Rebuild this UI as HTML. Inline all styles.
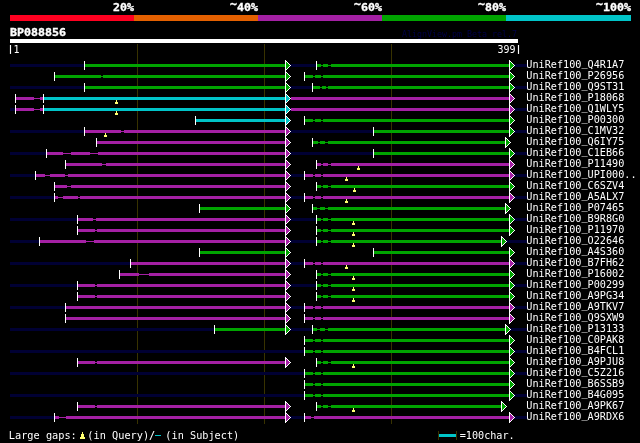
<!DOCTYPE html>
<html><head><meta charset="utf-8"><title>AlignView</title>
<style>html,body{margin:0;padding:0;background:#000;overflow:hidden}svg{display:block;will-change:transform}text{font-family:"DejaVu Sans Mono","Liberation Mono",monospace}</style>
</head><body>
<svg width="640" height="443" viewBox="0 0 640 443" shape-rendering="crispEdges">
<rect x="0" y="0" width="640" height="443" fill="#000"/>
<rect x="10" y="15" width="124" height="6" fill="#ff0020"/>
<rect x="134" y="15" width="124" height="6" fill="#e46000"/>
<rect x="258" y="15" width="124" height="6" fill="#a420a4"/>
<rect x="382" y="15" width="124" height="6" fill="#00a400"/>
<rect x="506" y="15" width="125" height="6" fill="#00c4c8"/>
<text x="113" y="11" font-size="11" font-weight="bold" fill="#fff" textLength="21" lengthAdjust="spacingAndGlyphs" xml:space="preserve" stroke="#fff" stroke-width="0.35">20%</text>
<text x="230" y="11" font-size="11" font-weight="bold" fill="#fff" textLength="28" lengthAdjust="spacingAndGlyphs" xml:space="preserve" stroke="#fff" stroke-width="0.35"><tspan dy="-3.5">~</tspan><tspan dy="3.5">40%</tspan></text>
<text x="354" y="11" font-size="11" font-weight="bold" fill="#fff" textLength="28" lengthAdjust="spacingAndGlyphs" xml:space="preserve" stroke="#fff" stroke-width="0.35"><tspan dy="-3.5">~</tspan><tspan dy="3.5">60%</tspan></text>
<text x="478" y="11" font-size="11" font-weight="bold" fill="#fff" textLength="28" lengthAdjust="spacingAndGlyphs" xml:space="preserve" stroke="#fff" stroke-width="0.35"><tspan dy="-3.5">~</tspan><tspan dy="3.5">80%</tspan></text>
<text x="596" y="11" font-size="11" font-weight="bold" fill="#fff" textLength="35" lengthAdjust="spacingAndGlyphs" xml:space="preserve" stroke="#fff" stroke-width="0.35"><tspan dy="-3.5">~</tspan><tspan dy="3.5">100%</tspan></text>
<text x="10" y="36" font-size="11" font-weight="bold" fill="#fff" textLength="56" lengthAdjust="spacingAndGlyphs" xml:space="preserve" stroke="#fff" stroke-width="0.35">BP088856</text>
<text x="402" y="37" font-size="8" font-weight="normal" fill="#000048" textLength="115" lengthAdjust="spacingAndGlyphs" xml:space="preserve">AlignView.pm Beta rel.7</text>
<rect x="10" y="39" width="508" height="4" fill="#fff"/>
<text x="7.5" y="52" font-size="9" font-weight="bold" fill="#fff" textLength="6" lengthAdjust="spacingAndGlyphs" xml:space="preserve">|</text>
<text x="13.5" y="53" font-size="11" font-weight="normal" fill="#fff" textLength="6" lengthAdjust="spacingAndGlyphs" xml:space="preserve">1</text>
<text x="497.5" y="53" font-size="11" font-weight="normal" fill="#fff" textLength="18" lengthAdjust="spacingAndGlyphs" xml:space="preserve">399</text>
<text x="515.5" y="52" font-size="9" font-weight="bold" fill="#fff" textLength="6" lengthAdjust="spacingAndGlyphs" xml:space="preserve">|</text>
<rect x="137" y="44" width="1" height="380" fill="#383200"/>
<rect x="264" y="44" width="1" height="380" fill="#383200"/>
<rect x="391" y="44" width="1" height="380" fill="#383200"/>
<rect x="10" y="64" width="517" height="3" fill="#000033"/>
<rect x="85" y="64" width="200" height="3" fill="#00a400"/>
<rect x="84" y="61" width="1" height="9" fill="#fff"/>
<path d="M286 61L290 65.5L286 70Z" fill="#00a400"/>
<rect x="285" y="60" width="1" height="11" fill="#fff"/>
<rect x="286" y="61" width="1" height="1" fill="#fff"/>
<rect x="286" y="69" width="1" height="1" fill="#fff"/>
<rect x="287" y="62" width="1" height="1" fill="#fff"/>
<rect x="287" y="68" width="1" height="1" fill="#fff"/>
<rect x="288" y="63" width="1" height="1" fill="#fff"/>
<rect x="288" y="67" width="1" height="1" fill="#fff"/>
<rect x="289" y="64" width="1" height="1" fill="#fff"/>
<rect x="289" y="66" width="1" height="1" fill="#fff"/>
<rect x="290" y="65" width="1" height="1" fill="#fff"/>
<rect x="317" y="64" width="192" height="3" fill="#000"/>
<rect x="317" y="65" width="192" height="1" fill="#00a400"/>
<rect x="317" y="64" width="4" height="3" fill="#00a400"/>
<rect x="323" y="64" width="5" height="3" fill="#00a400"/>
<rect x="331" y="64" width="178" height="3" fill="#00a400"/>
<rect x="316" y="61" width="1" height="9" fill="#fff"/>
<path d="M510 61L514 65.5L510 70Z" fill="#00a400"/>
<rect x="509" y="60" width="1" height="11" fill="#fff"/>
<rect x="510" y="61" width="1" height="1" fill="#fff"/>
<rect x="510" y="69" width="1" height="1" fill="#fff"/>
<rect x="511" y="62" width="1" height="1" fill="#fff"/>
<rect x="511" y="68" width="1" height="1" fill="#fff"/>
<rect x="512" y="63" width="1" height="1" fill="#fff"/>
<rect x="512" y="67" width="1" height="1" fill="#fff"/>
<rect x="513" y="64" width="1" height="1" fill="#fff"/>
<rect x="513" y="66" width="1" height="1" fill="#fff"/>
<rect x="514" y="65" width="1" height="1" fill="#fff"/>
<text x="526.3" y="68" font-size="11" font-weight="normal" fill="#fff" textLength="98.0" lengthAdjust="spacingAndGlyphs" xml:space="preserve">UniRef100<tspan dy="-2">_</tspan><tspan dy="2">Q4R1A7</tspan></text>
<rect x="55" y="76" width="230" height="1" fill="#00a400"/>
<rect x="55" y="75" width="46" height="3" fill="#00a400"/>
<rect x="103" y="75" width="182" height="3" fill="#00a400"/>
<rect x="54" y="72" width="1" height="9" fill="#fff"/>
<path d="M286 72L290 76.5L286 81Z" fill="#00a400"/>
<rect x="285" y="71" width="1" height="11" fill="#fff"/>
<rect x="286" y="72" width="1" height="1" fill="#fff"/>
<rect x="286" y="80" width="1" height="1" fill="#fff"/>
<rect x="287" y="73" width="1" height="1" fill="#fff"/>
<rect x="287" y="79" width="1" height="1" fill="#fff"/>
<rect x="288" y="74" width="1" height="1" fill="#fff"/>
<rect x="288" y="78" width="1" height="1" fill="#fff"/>
<rect x="289" y="75" width="1" height="1" fill="#fff"/>
<rect x="289" y="77" width="1" height="1" fill="#fff"/>
<rect x="290" y="76" width="1" height="1" fill="#fff"/>
<rect x="305" y="76" width="204" height="1" fill="#00a400"/>
<rect x="305" y="75" width="8" height="3" fill="#00a400"/>
<rect x="315" y="75" width="6" height="3" fill="#00a400"/>
<rect x="323" y="75" width="186" height="3" fill="#00a400"/>
<rect x="304" y="72" width="1" height="9" fill="#fff"/>
<path d="M510 72L514 76.5L510 81Z" fill="#00a400"/>
<rect x="509" y="71" width="1" height="11" fill="#fff"/>
<rect x="510" y="72" width="1" height="1" fill="#fff"/>
<rect x="510" y="80" width="1" height="1" fill="#fff"/>
<rect x="511" y="73" width="1" height="1" fill="#fff"/>
<rect x="511" y="79" width="1" height="1" fill="#fff"/>
<rect x="512" y="74" width="1" height="1" fill="#fff"/>
<rect x="512" y="78" width="1" height="1" fill="#fff"/>
<rect x="513" y="75" width="1" height="1" fill="#fff"/>
<rect x="513" y="77" width="1" height="1" fill="#fff"/>
<rect x="514" y="76" width="1" height="1" fill="#fff"/>
<text x="526.3" y="79" font-size="11" font-weight="normal" fill="#fff" textLength="98.0" lengthAdjust="spacingAndGlyphs" xml:space="preserve">UniRef100<tspan dy="-2">_</tspan><tspan dy="2">P26956</tspan></text>
<rect x="10" y="86" width="517" height="3" fill="#000033"/>
<rect x="85" y="86" width="200" height="3" fill="#00a400"/>
<rect x="84" y="83" width="1" height="9" fill="#fff"/>
<path d="M286 83L290 87.5L286 92Z" fill="#00a400"/>
<rect x="285" y="82" width="1" height="11" fill="#fff"/>
<rect x="286" y="83" width="1" height="1" fill="#fff"/>
<rect x="286" y="91" width="1" height="1" fill="#fff"/>
<rect x="287" y="84" width="1" height="1" fill="#fff"/>
<rect x="287" y="90" width="1" height="1" fill="#fff"/>
<rect x="288" y="85" width="1" height="1" fill="#fff"/>
<rect x="288" y="89" width="1" height="1" fill="#fff"/>
<rect x="289" y="86" width="1" height="1" fill="#fff"/>
<rect x="289" y="88" width="1" height="1" fill="#fff"/>
<rect x="290" y="87" width="1" height="1" fill="#fff"/>
<rect x="313" y="86" width="196" height="3" fill="#000"/>
<rect x="313" y="87" width="196" height="1" fill="#00a400"/>
<rect x="313" y="86" width="7" height="3" fill="#00a400"/>
<rect x="322" y="86" width="4" height="3" fill="#00a400"/>
<rect x="328" y="86" width="181" height="3" fill="#00a400"/>
<rect x="312" y="83" width="1" height="9" fill="#fff"/>
<path d="M510 83L514 87.5L510 92Z" fill="#00a400"/>
<rect x="509" y="82" width="1" height="11" fill="#fff"/>
<rect x="510" y="83" width="1" height="1" fill="#fff"/>
<rect x="510" y="91" width="1" height="1" fill="#fff"/>
<rect x="511" y="84" width="1" height="1" fill="#fff"/>
<rect x="511" y="90" width="1" height="1" fill="#fff"/>
<rect x="512" y="85" width="1" height="1" fill="#fff"/>
<rect x="512" y="89" width="1" height="1" fill="#fff"/>
<rect x="513" y="86" width="1" height="1" fill="#fff"/>
<rect x="513" y="88" width="1" height="1" fill="#fff"/>
<rect x="514" y="87" width="1" height="1" fill="#fff"/>
<text x="526.3" y="90" font-size="11" font-weight="normal" fill="#fff" textLength="98.0" lengthAdjust="spacingAndGlyphs" xml:space="preserve">UniRef100<tspan dy="-2">_</tspan><tspan dy="2">Q9ST31</tspan></text>
<rect x="16" y="98" width="27" height="1" fill="#a420a4"/>
<rect x="16" y="97" width="18" height="3" fill="#a420a4"/>
<rect x="40" y="97" width="3" height="3" fill="#a420a4"/>
<rect x="15" y="94" width="1" height="9" fill="#fff"/>
<rect x="44" y="97" width="241" height="3" fill="#00c4c8"/>
<rect x="43" y="94" width="1" height="9" fill="#fff"/>
<path d="M286 94L290 98.5L286 103Z" fill="#00c4c8"/>
<rect x="285" y="93" width="1" height="11" fill="#fff"/>
<rect x="286" y="94" width="1" height="1" fill="#fff"/>
<rect x="286" y="102" width="1" height="1" fill="#fff"/>
<rect x="287" y="95" width="1" height="1" fill="#fff"/>
<rect x="287" y="101" width="1" height="1" fill="#fff"/>
<rect x="288" y="96" width="1" height="1" fill="#fff"/>
<rect x="288" y="100" width="1" height="1" fill="#fff"/>
<rect x="289" y="97" width="1" height="1" fill="#fff"/>
<rect x="289" y="99" width="1" height="1" fill="#fff"/>
<rect x="290" y="98" width="1" height="1" fill="#fff"/>
<rect x="291" y="97" width="218" height="3" fill="#a420a4"/>
<path d="M510 94L514 98.5L510 103Z" fill="#a420a4"/>
<rect x="509" y="93" width="1" height="11" fill="#fff"/>
<rect x="510" y="94" width="1" height="1" fill="#fff"/>
<rect x="510" y="102" width="1" height="1" fill="#fff"/>
<rect x="511" y="95" width="1" height="1" fill="#fff"/>
<rect x="511" y="101" width="1" height="1" fill="#fff"/>
<rect x="512" y="96" width="1" height="1" fill="#fff"/>
<rect x="512" y="100" width="1" height="1" fill="#fff"/>
<rect x="513" y="97" width="1" height="1" fill="#fff"/>
<rect x="513" y="99" width="1" height="1" fill="#fff"/>
<rect x="514" y="98" width="1" height="1" fill="#fff"/>
<rect x="116" y="100" width="1" height="2" fill="#ffff70"/>
<rect x="115" y="102" width="3" height="2" fill="#ffff70"/>
<text x="526.3" y="101" font-size="11" font-weight="normal" fill="#fff" textLength="98.0" lengthAdjust="spacingAndGlyphs" xml:space="preserve">UniRef100<tspan dy="-2">_</tspan><tspan dy="2">P18068</tspan></text>
<rect x="10" y="108" width="517" height="3" fill="#000033"/>
<rect x="16" y="108" width="27" height="3" fill="#000"/>
<rect x="16" y="109" width="27" height="1" fill="#a420a4"/>
<rect x="16" y="108" width="18" height="3" fill="#a420a4"/>
<rect x="40" y="108" width="3" height="3" fill="#a420a4"/>
<rect x="15" y="105" width="1" height="9" fill="#fff"/>
<rect x="44" y="108" width="241" height="3" fill="#00c4c8"/>
<rect x="43" y="105" width="1" height="9" fill="#fff"/>
<path d="M286 105L290 109.5L286 114Z" fill="#00c4c8"/>
<rect x="285" y="104" width="1" height="11" fill="#fff"/>
<rect x="286" y="105" width="1" height="1" fill="#fff"/>
<rect x="286" y="113" width="1" height="1" fill="#fff"/>
<rect x="287" y="106" width="1" height="1" fill="#fff"/>
<rect x="287" y="112" width="1" height="1" fill="#fff"/>
<rect x="288" y="107" width="1" height="1" fill="#fff"/>
<rect x="288" y="111" width="1" height="1" fill="#fff"/>
<rect x="289" y="108" width="1" height="1" fill="#fff"/>
<rect x="289" y="110" width="1" height="1" fill="#fff"/>
<rect x="290" y="109" width="1" height="1" fill="#fff"/>
<rect x="291" y="108" width="218" height="3" fill="#a420a4"/>
<path d="M510 105L514 109.5L510 114Z" fill="#a420a4"/>
<rect x="509" y="104" width="1" height="11" fill="#fff"/>
<rect x="510" y="105" width="1" height="1" fill="#fff"/>
<rect x="510" y="113" width="1" height="1" fill="#fff"/>
<rect x="511" y="106" width="1" height="1" fill="#fff"/>
<rect x="511" y="112" width="1" height="1" fill="#fff"/>
<rect x="512" y="107" width="1" height="1" fill="#fff"/>
<rect x="512" y="111" width="1" height="1" fill="#fff"/>
<rect x="513" y="108" width="1" height="1" fill="#fff"/>
<rect x="513" y="110" width="1" height="1" fill="#fff"/>
<rect x="514" y="109" width="1" height="1" fill="#fff"/>
<rect x="116" y="111" width="1" height="2" fill="#ffff70"/>
<rect x="115" y="113" width="3" height="2" fill="#ffff70"/>
<text x="526.3" y="112" font-size="11" font-weight="normal" fill="#fff" textLength="98.0" lengthAdjust="spacingAndGlyphs" xml:space="preserve">UniRef100<tspan dy="-2">_</tspan><tspan dy="2">Q1WLY5</tspan></text>
<rect x="196" y="119" width="89" height="3" fill="#00c4c8"/>
<rect x="195" y="116" width="1" height="9" fill="#fff"/>
<path d="M286 116L290 120.5L286 125Z" fill="#00c4c8"/>
<rect x="285" y="115" width="1" height="11" fill="#fff"/>
<rect x="286" y="116" width="1" height="1" fill="#fff"/>
<rect x="286" y="124" width="1" height="1" fill="#fff"/>
<rect x="287" y="117" width="1" height="1" fill="#fff"/>
<rect x="287" y="123" width="1" height="1" fill="#fff"/>
<rect x="288" y="118" width="1" height="1" fill="#fff"/>
<rect x="288" y="122" width="1" height="1" fill="#fff"/>
<rect x="289" y="119" width="1" height="1" fill="#fff"/>
<rect x="289" y="121" width="1" height="1" fill="#fff"/>
<rect x="290" y="120" width="1" height="1" fill="#fff"/>
<rect x="305" y="120" width="204" height="1" fill="#00a400"/>
<rect x="305" y="119" width="8" height="3" fill="#00a400"/>
<rect x="315" y="119" width="6" height="3" fill="#00a400"/>
<rect x="323" y="119" width="186" height="3" fill="#00a400"/>
<rect x="304" y="116" width="1" height="9" fill="#fff"/>
<path d="M510 116L514 120.5L510 125Z" fill="#00a400"/>
<rect x="509" y="115" width="1" height="11" fill="#fff"/>
<rect x="510" y="116" width="1" height="1" fill="#fff"/>
<rect x="510" y="124" width="1" height="1" fill="#fff"/>
<rect x="511" y="117" width="1" height="1" fill="#fff"/>
<rect x="511" y="123" width="1" height="1" fill="#fff"/>
<rect x="512" y="118" width="1" height="1" fill="#fff"/>
<rect x="512" y="122" width="1" height="1" fill="#fff"/>
<rect x="513" y="119" width="1" height="1" fill="#fff"/>
<rect x="513" y="121" width="1" height="1" fill="#fff"/>
<rect x="514" y="120" width="1" height="1" fill="#fff"/>
<text x="526.3" y="123" font-size="11" font-weight="normal" fill="#fff" textLength="98.0" lengthAdjust="spacingAndGlyphs" xml:space="preserve">UniRef100<tspan dy="-2">_</tspan><tspan dy="2">P00300</tspan></text>
<rect x="10" y="130" width="517" height="3" fill="#000033"/>
<rect x="85" y="130" width="200" height="3" fill="#000"/>
<rect x="85" y="131" width="200" height="1" fill="#a420a4"/>
<rect x="85" y="130" width="36" height="3" fill="#a420a4"/>
<rect x="124" y="130" width="161" height="3" fill="#a420a4"/>
<rect x="84" y="127" width="1" height="9" fill="#fff"/>
<path d="M286 127L290 131.5L286 136Z" fill="#a420a4"/>
<rect x="285" y="126" width="1" height="11" fill="#fff"/>
<rect x="286" y="127" width="1" height="1" fill="#fff"/>
<rect x="286" y="135" width="1" height="1" fill="#fff"/>
<rect x="287" y="128" width="1" height="1" fill="#fff"/>
<rect x="287" y="134" width="1" height="1" fill="#fff"/>
<rect x="288" y="129" width="1" height="1" fill="#fff"/>
<rect x="288" y="133" width="1" height="1" fill="#fff"/>
<rect x="289" y="130" width="1" height="1" fill="#fff"/>
<rect x="289" y="132" width="1" height="1" fill="#fff"/>
<rect x="290" y="131" width="1" height="1" fill="#fff"/>
<rect x="374" y="130" width="135" height="3" fill="#00a400"/>
<rect x="373" y="127" width="1" height="9" fill="#fff"/>
<path d="M510 127L514 131.5L510 136Z" fill="#00a400"/>
<rect x="509" y="126" width="1" height="11" fill="#fff"/>
<rect x="510" y="127" width="1" height="1" fill="#fff"/>
<rect x="510" y="135" width="1" height="1" fill="#fff"/>
<rect x="511" y="128" width="1" height="1" fill="#fff"/>
<rect x="511" y="134" width="1" height="1" fill="#fff"/>
<rect x="512" y="129" width="1" height="1" fill="#fff"/>
<rect x="512" y="133" width="1" height="1" fill="#fff"/>
<rect x="513" y="130" width="1" height="1" fill="#fff"/>
<rect x="513" y="132" width="1" height="1" fill="#fff"/>
<rect x="514" y="131" width="1" height="1" fill="#fff"/>
<rect x="105" y="133" width="1" height="2" fill="#ffff70"/>
<rect x="104" y="135" width="3" height="2" fill="#ffff70"/>
<text x="526.3" y="134" font-size="11" font-weight="normal" fill="#fff" textLength="98.0" lengthAdjust="spacingAndGlyphs" xml:space="preserve">UniRef100<tspan dy="-2">_</tspan><tspan dy="2">C1MV32</tspan></text>
<rect x="97" y="141" width="188" height="3" fill="#a420a4"/>
<rect x="96" y="138" width="1" height="9" fill="#fff"/>
<path d="M286 138L290 142.5L286 147Z" fill="#a420a4"/>
<rect x="285" y="137" width="1" height="11" fill="#fff"/>
<rect x="286" y="138" width="1" height="1" fill="#fff"/>
<rect x="286" y="146" width="1" height="1" fill="#fff"/>
<rect x="287" y="139" width="1" height="1" fill="#fff"/>
<rect x="287" y="145" width="1" height="1" fill="#fff"/>
<rect x="288" y="140" width="1" height="1" fill="#fff"/>
<rect x="288" y="144" width="1" height="1" fill="#fff"/>
<rect x="289" y="141" width="1" height="1" fill="#fff"/>
<rect x="289" y="143" width="1" height="1" fill="#fff"/>
<rect x="290" y="142" width="1" height="1" fill="#fff"/>
<rect x="313" y="142" width="192" height="1" fill="#00a400"/>
<rect x="313" y="141" width="5" height="3" fill="#00a400"/>
<rect x="320" y="141" width="5" height="3" fill="#00a400"/>
<rect x="328" y="141" width="177" height="3" fill="#00a400"/>
<rect x="312" y="138" width="1" height="9" fill="#fff"/>
<path d="M506 138L510 142.5L506 147Z" fill="#00a400"/>
<rect x="505" y="137" width="1" height="11" fill="#fff"/>
<rect x="506" y="138" width="1" height="1" fill="#fff"/>
<rect x="506" y="146" width="1" height="1" fill="#fff"/>
<rect x="507" y="139" width="1" height="1" fill="#fff"/>
<rect x="507" y="145" width="1" height="1" fill="#fff"/>
<rect x="508" y="140" width="1" height="1" fill="#fff"/>
<rect x="508" y="144" width="1" height="1" fill="#fff"/>
<rect x="509" y="141" width="1" height="1" fill="#fff"/>
<rect x="509" y="143" width="1" height="1" fill="#fff"/>
<rect x="510" y="142" width="1" height="1" fill="#fff"/>
<text x="526.3" y="145" font-size="11" font-weight="normal" fill="#fff" textLength="98.0" lengthAdjust="spacingAndGlyphs" xml:space="preserve">UniRef100<tspan dy="-2">_</tspan><tspan dy="2">Q6IY75</tspan></text>
<rect x="10" y="152" width="517" height="3" fill="#000033"/>
<rect x="47" y="152" width="238" height="3" fill="#000"/>
<rect x="47" y="153" width="238" height="1" fill="#a420a4"/>
<rect x="47" y="152" width="16" height="3" fill="#a420a4"/>
<rect x="71" y="152" width="19" height="3" fill="#a420a4"/>
<rect x="98" y="152" width="187" height="3" fill="#a420a4"/>
<rect x="46" y="149" width="1" height="9" fill="#fff"/>
<path d="M286 149L290 153.5L286 158Z" fill="#a420a4"/>
<rect x="285" y="148" width="1" height="11" fill="#fff"/>
<rect x="286" y="149" width="1" height="1" fill="#fff"/>
<rect x="286" y="157" width="1" height="1" fill="#fff"/>
<rect x="287" y="150" width="1" height="1" fill="#fff"/>
<rect x="287" y="156" width="1" height="1" fill="#fff"/>
<rect x="288" y="151" width="1" height="1" fill="#fff"/>
<rect x="288" y="155" width="1" height="1" fill="#fff"/>
<rect x="289" y="152" width="1" height="1" fill="#fff"/>
<rect x="289" y="154" width="1" height="1" fill="#fff"/>
<rect x="290" y="153" width="1" height="1" fill="#fff"/>
<rect x="374" y="152" width="135" height="3" fill="#00a400"/>
<rect x="373" y="149" width="1" height="9" fill="#fff"/>
<path d="M510 149L514 153.5L510 158Z" fill="#00a400"/>
<rect x="509" y="148" width="1" height="11" fill="#fff"/>
<rect x="510" y="149" width="1" height="1" fill="#fff"/>
<rect x="510" y="157" width="1" height="1" fill="#fff"/>
<rect x="511" y="150" width="1" height="1" fill="#fff"/>
<rect x="511" y="156" width="1" height="1" fill="#fff"/>
<rect x="512" y="151" width="1" height="1" fill="#fff"/>
<rect x="512" y="155" width="1" height="1" fill="#fff"/>
<rect x="513" y="152" width="1" height="1" fill="#fff"/>
<rect x="513" y="154" width="1" height="1" fill="#fff"/>
<rect x="514" y="153" width="1" height="1" fill="#fff"/>
<text x="526.3" y="156" font-size="11" font-weight="normal" fill="#fff" textLength="98.0" lengthAdjust="spacingAndGlyphs" xml:space="preserve">UniRef100<tspan dy="-2">_</tspan><tspan dy="2">C1EB66</tspan></text>
<rect x="66" y="164" width="219" height="1" fill="#a420a4"/>
<rect x="66" y="163" width="36" height="3" fill="#a420a4"/>
<rect x="106" y="163" width="179" height="3" fill="#a420a4"/>
<rect x="65" y="160" width="1" height="9" fill="#fff"/>
<path d="M286 160L290 164.5L286 169Z" fill="#a420a4"/>
<rect x="285" y="159" width="1" height="11" fill="#fff"/>
<rect x="286" y="160" width="1" height="1" fill="#fff"/>
<rect x="286" y="168" width="1" height="1" fill="#fff"/>
<rect x="287" y="161" width="1" height="1" fill="#fff"/>
<rect x="287" y="167" width="1" height="1" fill="#fff"/>
<rect x="288" y="162" width="1" height="1" fill="#fff"/>
<rect x="288" y="166" width="1" height="1" fill="#fff"/>
<rect x="289" y="163" width="1" height="1" fill="#fff"/>
<rect x="289" y="165" width="1" height="1" fill="#fff"/>
<rect x="290" y="164" width="1" height="1" fill="#fff"/>
<rect x="317" y="164" width="192" height="1" fill="#a420a4"/>
<rect x="317" y="163" width="4" height="3" fill="#a420a4"/>
<rect x="323" y="163" width="5" height="3" fill="#a420a4"/>
<rect x="331" y="163" width="178" height="3" fill="#a420a4"/>
<rect x="316" y="160" width="1" height="9" fill="#fff"/>
<path d="M510 160L514 164.5L510 169Z" fill="#a420a4"/>
<rect x="509" y="159" width="1" height="11" fill="#fff"/>
<rect x="510" y="160" width="1" height="1" fill="#fff"/>
<rect x="510" y="168" width="1" height="1" fill="#fff"/>
<rect x="511" y="161" width="1" height="1" fill="#fff"/>
<rect x="511" y="167" width="1" height="1" fill="#fff"/>
<rect x="512" y="162" width="1" height="1" fill="#fff"/>
<rect x="512" y="166" width="1" height="1" fill="#fff"/>
<rect x="513" y="163" width="1" height="1" fill="#fff"/>
<rect x="513" y="165" width="1" height="1" fill="#fff"/>
<rect x="514" y="164" width="1" height="1" fill="#fff"/>
<rect x="358" y="166" width="1" height="2" fill="#ffff70"/>
<rect x="357" y="168" width="3" height="2" fill="#ffff70"/>
<text x="526.3" y="167" font-size="11" font-weight="normal" fill="#fff" textLength="98.0" lengthAdjust="spacingAndGlyphs" xml:space="preserve">UniRef100<tspan dy="-2">_</tspan><tspan dy="2">P11490</tspan></text>
<rect x="10" y="174" width="517" height="3" fill="#000033"/>
<rect x="36" y="174" width="249" height="3" fill="#000"/>
<rect x="36" y="175" width="249" height="1" fill="#a420a4"/>
<rect x="36" y="174" width="9" height="3" fill="#a420a4"/>
<rect x="50" y="174" width="15" height="3" fill="#a420a4"/>
<rect x="68" y="174" width="217" height="3" fill="#a420a4"/>
<rect x="35" y="171" width="1" height="9" fill="#fff"/>
<path d="M286 171L290 175.5L286 180Z" fill="#a420a4"/>
<rect x="285" y="170" width="1" height="11" fill="#fff"/>
<rect x="286" y="171" width="1" height="1" fill="#fff"/>
<rect x="286" y="179" width="1" height="1" fill="#fff"/>
<rect x="287" y="172" width="1" height="1" fill="#fff"/>
<rect x="287" y="178" width="1" height="1" fill="#fff"/>
<rect x="288" y="173" width="1" height="1" fill="#fff"/>
<rect x="288" y="177" width="1" height="1" fill="#fff"/>
<rect x="289" y="174" width="1" height="1" fill="#fff"/>
<rect x="289" y="176" width="1" height="1" fill="#fff"/>
<rect x="290" y="175" width="1" height="1" fill="#fff"/>
<rect x="305" y="174" width="204" height="3" fill="#000"/>
<rect x="305" y="175" width="204" height="1" fill="#a420a4"/>
<rect x="305" y="174" width="8" height="3" fill="#a420a4"/>
<rect x="315" y="174" width="6" height="3" fill="#a420a4"/>
<rect x="323" y="174" width="186" height="3" fill="#a420a4"/>
<rect x="304" y="171" width="1" height="9" fill="#fff"/>
<path d="M510 171L514 175.5L510 180Z" fill="#a420a4"/>
<rect x="509" y="170" width="1" height="11" fill="#fff"/>
<rect x="510" y="171" width="1" height="1" fill="#fff"/>
<rect x="510" y="179" width="1" height="1" fill="#fff"/>
<rect x="511" y="172" width="1" height="1" fill="#fff"/>
<rect x="511" y="178" width="1" height="1" fill="#fff"/>
<rect x="512" y="173" width="1" height="1" fill="#fff"/>
<rect x="512" y="177" width="1" height="1" fill="#fff"/>
<rect x="513" y="174" width="1" height="1" fill="#fff"/>
<rect x="513" y="176" width="1" height="1" fill="#fff"/>
<rect x="514" y="175" width="1" height="1" fill="#fff"/>
<rect x="346" y="177" width="1" height="2" fill="#ffff70"/>
<rect x="345" y="179" width="3" height="2" fill="#ffff70"/>
<text x="526.3" y="178" font-size="11" font-weight="normal" fill="#fff" textLength="110.25" lengthAdjust="spacingAndGlyphs" xml:space="preserve">UniRef100<tspan dy="-2">_</tspan><tspan dy="2">UPI000..</tspan></text>
<rect x="55" y="186" width="230" height="1" fill="#a420a4"/>
<rect x="55" y="185" width="12" height="3" fill="#a420a4"/>
<rect x="71" y="185" width="214" height="3" fill="#a420a4"/>
<rect x="54" y="182" width="1" height="9" fill="#fff"/>
<path d="M286 182L290 186.5L286 191Z" fill="#a420a4"/>
<rect x="285" y="181" width="1" height="11" fill="#fff"/>
<rect x="286" y="182" width="1" height="1" fill="#fff"/>
<rect x="286" y="190" width="1" height="1" fill="#fff"/>
<rect x="287" y="183" width="1" height="1" fill="#fff"/>
<rect x="287" y="189" width="1" height="1" fill="#fff"/>
<rect x="288" y="184" width="1" height="1" fill="#fff"/>
<rect x="288" y="188" width="1" height="1" fill="#fff"/>
<rect x="289" y="185" width="1" height="1" fill="#fff"/>
<rect x="289" y="187" width="1" height="1" fill="#fff"/>
<rect x="290" y="186" width="1" height="1" fill="#fff"/>
<rect x="317" y="186" width="192" height="1" fill="#00a400"/>
<rect x="317" y="185" width="4" height="3" fill="#00a400"/>
<rect x="323" y="185" width="5" height="3" fill="#00a400"/>
<rect x="331" y="185" width="178" height="3" fill="#00a400"/>
<rect x="316" y="182" width="1" height="9" fill="#fff"/>
<path d="M510 182L514 186.5L510 191Z" fill="#00a400"/>
<rect x="509" y="181" width="1" height="11" fill="#fff"/>
<rect x="510" y="182" width="1" height="1" fill="#fff"/>
<rect x="510" y="190" width="1" height="1" fill="#fff"/>
<rect x="511" y="183" width="1" height="1" fill="#fff"/>
<rect x="511" y="189" width="1" height="1" fill="#fff"/>
<rect x="512" y="184" width="1" height="1" fill="#fff"/>
<rect x="512" y="188" width="1" height="1" fill="#fff"/>
<rect x="513" y="185" width="1" height="1" fill="#fff"/>
<rect x="513" y="187" width="1" height="1" fill="#fff"/>
<rect x="514" y="186" width="1" height="1" fill="#fff"/>
<rect x="354" y="188" width="1" height="2" fill="#ffff70"/>
<rect x="353" y="190" width="3" height="2" fill="#ffff70"/>
<text x="526.3" y="189" font-size="11" font-weight="normal" fill="#fff" textLength="98.0" lengthAdjust="spacingAndGlyphs" xml:space="preserve">UniRef100<tspan dy="-2">_</tspan><tspan dy="2">C6SZV4</tspan></text>
<rect x="10" y="196" width="517" height="3" fill="#000033"/>
<rect x="55" y="196" width="230" height="3" fill="#000"/>
<rect x="55" y="197" width="230" height="1" fill="#a420a4"/>
<rect x="55" y="196" width="3" height="3" fill="#a420a4"/>
<rect x="63" y="196" width="15" height="3" fill="#a420a4"/>
<rect x="80" y="196" width="205" height="3" fill="#a420a4"/>
<rect x="54" y="193" width="1" height="9" fill="#fff"/>
<path d="M286 193L290 197.5L286 202Z" fill="#a420a4"/>
<rect x="285" y="192" width="1" height="11" fill="#fff"/>
<rect x="286" y="193" width="1" height="1" fill="#fff"/>
<rect x="286" y="201" width="1" height="1" fill="#fff"/>
<rect x="287" y="194" width="1" height="1" fill="#fff"/>
<rect x="287" y="200" width="1" height="1" fill="#fff"/>
<rect x="288" y="195" width="1" height="1" fill="#fff"/>
<rect x="288" y="199" width="1" height="1" fill="#fff"/>
<rect x="289" y="196" width="1" height="1" fill="#fff"/>
<rect x="289" y="198" width="1" height="1" fill="#fff"/>
<rect x="290" y="197" width="1" height="1" fill="#fff"/>
<rect x="305" y="196" width="204" height="3" fill="#000"/>
<rect x="305" y="197" width="204" height="1" fill="#a420a4"/>
<rect x="305" y="196" width="8" height="3" fill="#a420a4"/>
<rect x="315" y="196" width="6" height="3" fill="#a420a4"/>
<rect x="323" y="196" width="186" height="3" fill="#a420a4"/>
<rect x="304" y="193" width="1" height="9" fill="#fff"/>
<path d="M510 193L514 197.5L510 202Z" fill="#a420a4"/>
<rect x="509" y="192" width="1" height="11" fill="#fff"/>
<rect x="510" y="193" width="1" height="1" fill="#fff"/>
<rect x="510" y="201" width="1" height="1" fill="#fff"/>
<rect x="511" y="194" width="1" height="1" fill="#fff"/>
<rect x="511" y="200" width="1" height="1" fill="#fff"/>
<rect x="512" y="195" width="1" height="1" fill="#fff"/>
<rect x="512" y="199" width="1" height="1" fill="#fff"/>
<rect x="513" y="196" width="1" height="1" fill="#fff"/>
<rect x="513" y="198" width="1" height="1" fill="#fff"/>
<rect x="514" y="197" width="1" height="1" fill="#fff"/>
<rect x="346" y="199" width="1" height="2" fill="#ffff70"/>
<rect x="345" y="201" width="3" height="2" fill="#ffff70"/>
<text x="526.3" y="200" font-size="11" font-weight="normal" fill="#fff" textLength="98.0" lengthAdjust="spacingAndGlyphs" xml:space="preserve">UniRef100<tspan dy="-2">_</tspan><tspan dy="2">A5ALX7</tspan></text>
<rect x="200" y="207" width="85" height="3" fill="#00a400"/>
<rect x="199" y="204" width="1" height="9" fill="#fff"/>
<path d="M286 204L290 208.5L286 213Z" fill="#00a400"/>
<rect x="285" y="203" width="1" height="11" fill="#fff"/>
<rect x="286" y="204" width="1" height="1" fill="#fff"/>
<rect x="286" y="212" width="1" height="1" fill="#fff"/>
<rect x="287" y="205" width="1" height="1" fill="#fff"/>
<rect x="287" y="211" width="1" height="1" fill="#fff"/>
<rect x="288" y="206" width="1" height="1" fill="#fff"/>
<rect x="288" y="210" width="1" height="1" fill="#fff"/>
<rect x="289" y="207" width="1" height="1" fill="#fff"/>
<rect x="289" y="209" width="1" height="1" fill="#fff"/>
<rect x="290" y="208" width="1" height="1" fill="#fff"/>
<rect x="313" y="208" width="192" height="1" fill="#00a400"/>
<rect x="313" y="207" width="4" height="3" fill="#00a400"/>
<rect x="320" y="207" width="5" height="3" fill="#00a400"/>
<rect x="328" y="207" width="177" height="3" fill="#00a400"/>
<rect x="312" y="204" width="1" height="9" fill="#fff"/>
<path d="M506 204L510 208.5L506 213Z" fill="#00a400"/>
<rect x="505" y="203" width="1" height="11" fill="#fff"/>
<rect x="506" y="204" width="1" height="1" fill="#fff"/>
<rect x="506" y="212" width="1" height="1" fill="#fff"/>
<rect x="507" y="205" width="1" height="1" fill="#fff"/>
<rect x="507" y="211" width="1" height="1" fill="#fff"/>
<rect x="508" y="206" width="1" height="1" fill="#fff"/>
<rect x="508" y="210" width="1" height="1" fill="#fff"/>
<rect x="509" y="207" width="1" height="1" fill="#fff"/>
<rect x="509" y="209" width="1" height="1" fill="#fff"/>
<rect x="510" y="208" width="1" height="1" fill="#fff"/>
<text x="526.3" y="211" font-size="11" font-weight="normal" fill="#fff" textLength="98.0" lengthAdjust="spacingAndGlyphs" xml:space="preserve">UniRef100<tspan dy="-2">_</tspan><tspan dy="2">P07465</tspan></text>
<rect x="10" y="218" width="517" height="3" fill="#000033"/>
<rect x="78" y="218" width="207" height="3" fill="#000"/>
<rect x="78" y="219" width="207" height="1" fill="#a420a4"/>
<rect x="78" y="218" width="15" height="3" fill="#a420a4"/>
<rect x="96" y="218" width="189" height="3" fill="#a420a4"/>
<rect x="77" y="215" width="1" height="9" fill="#fff"/>
<path d="M286 215L290 219.5L286 224Z" fill="#a420a4"/>
<rect x="285" y="214" width="1" height="11" fill="#fff"/>
<rect x="286" y="215" width="1" height="1" fill="#fff"/>
<rect x="286" y="223" width="1" height="1" fill="#fff"/>
<rect x="287" y="216" width="1" height="1" fill="#fff"/>
<rect x="287" y="222" width="1" height="1" fill="#fff"/>
<rect x="288" y="217" width="1" height="1" fill="#fff"/>
<rect x="288" y="221" width="1" height="1" fill="#fff"/>
<rect x="289" y="218" width="1" height="1" fill="#fff"/>
<rect x="289" y="220" width="1" height="1" fill="#fff"/>
<rect x="290" y="219" width="1" height="1" fill="#fff"/>
<rect x="317" y="218" width="192" height="3" fill="#000"/>
<rect x="317" y="219" width="192" height="1" fill="#00a400"/>
<rect x="317" y="218" width="4" height="3" fill="#00a400"/>
<rect x="323" y="218" width="5" height="3" fill="#00a400"/>
<rect x="331" y="218" width="178" height="3" fill="#00a400"/>
<rect x="316" y="215" width="1" height="9" fill="#fff"/>
<path d="M510 215L514 219.5L510 224Z" fill="#00a400"/>
<rect x="509" y="214" width="1" height="11" fill="#fff"/>
<rect x="510" y="215" width="1" height="1" fill="#fff"/>
<rect x="510" y="223" width="1" height="1" fill="#fff"/>
<rect x="511" y="216" width="1" height="1" fill="#fff"/>
<rect x="511" y="222" width="1" height="1" fill="#fff"/>
<rect x="512" y="217" width="1" height="1" fill="#fff"/>
<rect x="512" y="221" width="1" height="1" fill="#fff"/>
<rect x="513" y="218" width="1" height="1" fill="#fff"/>
<rect x="513" y="220" width="1" height="1" fill="#fff"/>
<rect x="514" y="219" width="1" height="1" fill="#fff"/>
<rect x="353" y="221" width="1" height="2" fill="#ffff70"/>
<rect x="352" y="223" width="3" height="2" fill="#ffff70"/>
<text x="526.3" y="222" font-size="11" font-weight="normal" fill="#fff" textLength="98.0" lengthAdjust="spacingAndGlyphs" xml:space="preserve">UniRef100<tspan dy="-2">_</tspan><tspan dy="2">B9R8G0</tspan></text>
<rect x="78" y="230" width="207" height="1" fill="#a420a4"/>
<rect x="78" y="229" width="17" height="3" fill="#a420a4"/>
<rect x="97" y="229" width="188" height="3" fill="#a420a4"/>
<rect x="77" y="226" width="1" height="9" fill="#fff"/>
<path d="M286 226L290 230.5L286 235Z" fill="#a420a4"/>
<rect x="285" y="225" width="1" height="11" fill="#fff"/>
<rect x="286" y="226" width="1" height="1" fill="#fff"/>
<rect x="286" y="234" width="1" height="1" fill="#fff"/>
<rect x="287" y="227" width="1" height="1" fill="#fff"/>
<rect x="287" y="233" width="1" height="1" fill="#fff"/>
<rect x="288" y="228" width="1" height="1" fill="#fff"/>
<rect x="288" y="232" width="1" height="1" fill="#fff"/>
<rect x="289" y="229" width="1" height="1" fill="#fff"/>
<rect x="289" y="231" width="1" height="1" fill="#fff"/>
<rect x="290" y="230" width="1" height="1" fill="#fff"/>
<rect x="317" y="230" width="192" height="1" fill="#00a400"/>
<rect x="317" y="229" width="4" height="3" fill="#00a400"/>
<rect x="323" y="229" width="5" height="3" fill="#00a400"/>
<rect x="331" y="229" width="178" height="3" fill="#00a400"/>
<rect x="316" y="226" width="1" height="9" fill="#fff"/>
<path d="M510 226L514 230.5L510 235Z" fill="#00a400"/>
<rect x="509" y="225" width="1" height="11" fill="#fff"/>
<rect x="510" y="226" width="1" height="1" fill="#fff"/>
<rect x="510" y="234" width="1" height="1" fill="#fff"/>
<rect x="511" y="227" width="1" height="1" fill="#fff"/>
<rect x="511" y="233" width="1" height="1" fill="#fff"/>
<rect x="512" y="228" width="1" height="1" fill="#fff"/>
<rect x="512" y="232" width="1" height="1" fill="#fff"/>
<rect x="513" y="229" width="1" height="1" fill="#fff"/>
<rect x="513" y="231" width="1" height="1" fill="#fff"/>
<rect x="514" y="230" width="1" height="1" fill="#fff"/>
<rect x="353" y="232" width="1" height="2" fill="#ffff70"/>
<rect x="352" y="234" width="3" height="2" fill="#ffff70"/>
<text x="526.3" y="233" font-size="11" font-weight="normal" fill="#fff" textLength="98.0" lengthAdjust="spacingAndGlyphs" xml:space="preserve">UniRef100<tspan dy="-2">_</tspan><tspan dy="2">P11970</tspan></text>
<rect x="10" y="240" width="517" height="3" fill="#000033"/>
<rect x="40" y="240" width="245" height="3" fill="#000"/>
<rect x="40" y="241" width="245" height="1" fill="#a420a4"/>
<rect x="40" y="240" width="46" height="3" fill="#a420a4"/>
<rect x="94" y="240" width="191" height="3" fill="#a420a4"/>
<rect x="39" y="237" width="1" height="9" fill="#fff"/>
<path d="M286 237L290 241.5L286 246Z" fill="#a420a4"/>
<rect x="285" y="236" width="1" height="11" fill="#fff"/>
<rect x="286" y="237" width="1" height="1" fill="#fff"/>
<rect x="286" y="245" width="1" height="1" fill="#fff"/>
<rect x="287" y="238" width="1" height="1" fill="#fff"/>
<rect x="287" y="244" width="1" height="1" fill="#fff"/>
<rect x="288" y="239" width="1" height="1" fill="#fff"/>
<rect x="288" y="243" width="1" height="1" fill="#fff"/>
<rect x="289" y="240" width="1" height="1" fill="#fff"/>
<rect x="289" y="242" width="1" height="1" fill="#fff"/>
<rect x="290" y="241" width="1" height="1" fill="#fff"/>
<rect x="317" y="240" width="184" height="3" fill="#000"/>
<rect x="317" y="241" width="184" height="1" fill="#00a400"/>
<rect x="317" y="240" width="4" height="3" fill="#00a400"/>
<rect x="323" y="240" width="5" height="3" fill="#00a400"/>
<rect x="331" y="240" width="170" height="3" fill="#00a400"/>
<rect x="316" y="237" width="1" height="9" fill="#fff"/>
<path d="M502 237L506 241.5L502 246Z" fill="#00a400"/>
<rect x="501" y="236" width="1" height="11" fill="#fff"/>
<rect x="502" y="237" width="1" height="1" fill="#fff"/>
<rect x="502" y="245" width="1" height="1" fill="#fff"/>
<rect x="503" y="238" width="1" height="1" fill="#fff"/>
<rect x="503" y="244" width="1" height="1" fill="#fff"/>
<rect x="504" y="239" width="1" height="1" fill="#fff"/>
<rect x="504" y="243" width="1" height="1" fill="#fff"/>
<rect x="505" y="240" width="1" height="1" fill="#fff"/>
<rect x="505" y="242" width="1" height="1" fill="#fff"/>
<rect x="506" y="241" width="1" height="1" fill="#fff"/>
<rect x="353" y="243" width="1" height="2" fill="#ffff70"/>
<rect x="352" y="245" width="3" height="2" fill="#ffff70"/>
<text x="526.3" y="244" font-size="11" font-weight="normal" fill="#fff" textLength="98.0" lengthAdjust="spacingAndGlyphs" xml:space="preserve">UniRef100<tspan dy="-2">_</tspan><tspan dy="2">O22646</tspan></text>
<rect x="200" y="251" width="85" height="3" fill="#00a400"/>
<rect x="199" y="248" width="1" height="9" fill="#fff"/>
<path d="M286 248L290 252.5L286 257Z" fill="#00a400"/>
<rect x="285" y="247" width="1" height="11" fill="#fff"/>
<rect x="286" y="248" width="1" height="1" fill="#fff"/>
<rect x="286" y="256" width="1" height="1" fill="#fff"/>
<rect x="287" y="249" width="1" height="1" fill="#fff"/>
<rect x="287" y="255" width="1" height="1" fill="#fff"/>
<rect x="288" y="250" width="1" height="1" fill="#fff"/>
<rect x="288" y="254" width="1" height="1" fill="#fff"/>
<rect x="289" y="251" width="1" height="1" fill="#fff"/>
<rect x="289" y="253" width="1" height="1" fill="#fff"/>
<rect x="290" y="252" width="1" height="1" fill="#fff"/>
<rect x="374" y="251" width="135" height="3" fill="#00a400"/>
<rect x="373" y="248" width="1" height="9" fill="#fff"/>
<path d="M510 248L514 252.5L510 257Z" fill="#00a400"/>
<rect x="509" y="247" width="1" height="11" fill="#fff"/>
<rect x="510" y="248" width="1" height="1" fill="#fff"/>
<rect x="510" y="256" width="1" height="1" fill="#fff"/>
<rect x="511" y="249" width="1" height="1" fill="#fff"/>
<rect x="511" y="255" width="1" height="1" fill="#fff"/>
<rect x="512" y="250" width="1" height="1" fill="#fff"/>
<rect x="512" y="254" width="1" height="1" fill="#fff"/>
<rect x="513" y="251" width="1" height="1" fill="#fff"/>
<rect x="513" y="253" width="1" height="1" fill="#fff"/>
<rect x="514" y="252" width="1" height="1" fill="#fff"/>
<text x="526.3" y="255" font-size="11" font-weight="normal" fill="#fff" textLength="98.0" lengthAdjust="spacingAndGlyphs" xml:space="preserve">UniRef100<tspan dy="-2">_</tspan><tspan dy="2">A4S360</tspan></text>
<rect x="10" y="262" width="517" height="3" fill="#000033"/>
<rect x="131" y="262" width="154" height="3" fill="#a420a4"/>
<rect x="130" y="259" width="1" height="9" fill="#fff"/>
<path d="M286 259L290 263.5L286 268Z" fill="#a420a4"/>
<rect x="285" y="258" width="1" height="11" fill="#fff"/>
<rect x="286" y="259" width="1" height="1" fill="#fff"/>
<rect x="286" y="267" width="1" height="1" fill="#fff"/>
<rect x="287" y="260" width="1" height="1" fill="#fff"/>
<rect x="287" y="266" width="1" height="1" fill="#fff"/>
<rect x="288" y="261" width="1" height="1" fill="#fff"/>
<rect x="288" y="265" width="1" height="1" fill="#fff"/>
<rect x="289" y="262" width="1" height="1" fill="#fff"/>
<rect x="289" y="264" width="1" height="1" fill="#fff"/>
<rect x="290" y="263" width="1" height="1" fill="#fff"/>
<rect x="305" y="262" width="204" height="3" fill="#000"/>
<rect x="305" y="263" width="204" height="1" fill="#a420a4"/>
<rect x="305" y="262" width="8" height="3" fill="#a420a4"/>
<rect x="315" y="262" width="6" height="3" fill="#a420a4"/>
<rect x="323" y="262" width="186" height="3" fill="#a420a4"/>
<rect x="304" y="259" width="1" height="9" fill="#fff"/>
<path d="M510 259L514 263.5L510 268Z" fill="#a420a4"/>
<rect x="509" y="258" width="1" height="11" fill="#fff"/>
<rect x="510" y="259" width="1" height="1" fill="#fff"/>
<rect x="510" y="267" width="1" height="1" fill="#fff"/>
<rect x="511" y="260" width="1" height="1" fill="#fff"/>
<rect x="511" y="266" width="1" height="1" fill="#fff"/>
<rect x="512" y="261" width="1" height="1" fill="#fff"/>
<rect x="512" y="265" width="1" height="1" fill="#fff"/>
<rect x="513" y="262" width="1" height="1" fill="#fff"/>
<rect x="513" y="264" width="1" height="1" fill="#fff"/>
<rect x="514" y="263" width="1" height="1" fill="#fff"/>
<rect x="346" y="265" width="1" height="2" fill="#ffff70"/>
<rect x="345" y="267" width="3" height="2" fill="#ffff70"/>
<text x="526.3" y="266" font-size="11" font-weight="normal" fill="#fff" textLength="98.0" lengthAdjust="spacingAndGlyphs" xml:space="preserve">UniRef100<tspan dy="-2">_</tspan><tspan dy="2">B7FH62</tspan></text>
<rect x="120" y="274" width="165" height="1" fill="#a420a4"/>
<rect x="120" y="273" width="19" height="3" fill="#a420a4"/>
<rect x="149" y="273" width="136" height="3" fill="#a420a4"/>
<rect x="119" y="270" width="1" height="9" fill="#fff"/>
<path d="M286 270L290 274.5L286 279Z" fill="#a420a4"/>
<rect x="285" y="269" width="1" height="11" fill="#fff"/>
<rect x="286" y="270" width="1" height="1" fill="#fff"/>
<rect x="286" y="278" width="1" height="1" fill="#fff"/>
<rect x="287" y="271" width="1" height="1" fill="#fff"/>
<rect x="287" y="277" width="1" height="1" fill="#fff"/>
<rect x="288" y="272" width="1" height="1" fill="#fff"/>
<rect x="288" y="276" width="1" height="1" fill="#fff"/>
<rect x="289" y="273" width="1" height="1" fill="#fff"/>
<rect x="289" y="275" width="1" height="1" fill="#fff"/>
<rect x="290" y="274" width="1" height="1" fill="#fff"/>
<rect x="317" y="274" width="192" height="1" fill="#00a400"/>
<rect x="317" y="273" width="4" height="3" fill="#00a400"/>
<rect x="323" y="273" width="5" height="3" fill="#00a400"/>
<rect x="331" y="273" width="178" height="3" fill="#00a400"/>
<rect x="316" y="270" width="1" height="9" fill="#fff"/>
<path d="M510 270L514 274.5L510 279Z" fill="#00a400"/>
<rect x="509" y="269" width="1" height="11" fill="#fff"/>
<rect x="510" y="270" width="1" height="1" fill="#fff"/>
<rect x="510" y="278" width="1" height="1" fill="#fff"/>
<rect x="511" y="271" width="1" height="1" fill="#fff"/>
<rect x="511" y="277" width="1" height="1" fill="#fff"/>
<rect x="512" y="272" width="1" height="1" fill="#fff"/>
<rect x="512" y="276" width="1" height="1" fill="#fff"/>
<rect x="513" y="273" width="1" height="1" fill="#fff"/>
<rect x="513" y="275" width="1" height="1" fill="#fff"/>
<rect x="514" y="274" width="1" height="1" fill="#fff"/>
<rect x="353" y="276" width="1" height="2" fill="#ffff70"/>
<rect x="352" y="278" width="3" height="2" fill="#ffff70"/>
<text x="526.3" y="277" font-size="11" font-weight="normal" fill="#fff" textLength="98.0" lengthAdjust="spacingAndGlyphs" xml:space="preserve">UniRef100<tspan dy="-2">_</tspan><tspan dy="2">P16002</tspan></text>
<rect x="10" y="284" width="517" height="3" fill="#000033"/>
<rect x="78" y="284" width="207" height="3" fill="#000"/>
<rect x="78" y="285" width="207" height="1" fill="#a420a4"/>
<rect x="78" y="284" width="17" height="3" fill="#a420a4"/>
<rect x="97" y="284" width="188" height="3" fill="#a420a4"/>
<rect x="77" y="281" width="1" height="9" fill="#fff"/>
<path d="M286 281L290 285.5L286 290Z" fill="#a420a4"/>
<rect x="285" y="280" width="1" height="11" fill="#fff"/>
<rect x="286" y="281" width="1" height="1" fill="#fff"/>
<rect x="286" y="289" width="1" height="1" fill="#fff"/>
<rect x="287" y="282" width="1" height="1" fill="#fff"/>
<rect x="287" y="288" width="1" height="1" fill="#fff"/>
<rect x="288" y="283" width="1" height="1" fill="#fff"/>
<rect x="288" y="287" width="1" height="1" fill="#fff"/>
<rect x="289" y="284" width="1" height="1" fill="#fff"/>
<rect x="289" y="286" width="1" height="1" fill="#fff"/>
<rect x="290" y="285" width="1" height="1" fill="#fff"/>
<rect x="317" y="284" width="192" height="3" fill="#000"/>
<rect x="317" y="285" width="192" height="1" fill="#00a400"/>
<rect x="317" y="284" width="4" height="3" fill="#00a400"/>
<rect x="323" y="284" width="5" height="3" fill="#00a400"/>
<rect x="331" y="284" width="178" height="3" fill="#00a400"/>
<rect x="316" y="281" width="1" height="9" fill="#fff"/>
<path d="M510 281L514 285.5L510 290Z" fill="#00a400"/>
<rect x="509" y="280" width="1" height="11" fill="#fff"/>
<rect x="510" y="281" width="1" height="1" fill="#fff"/>
<rect x="510" y="289" width="1" height="1" fill="#fff"/>
<rect x="511" y="282" width="1" height="1" fill="#fff"/>
<rect x="511" y="288" width="1" height="1" fill="#fff"/>
<rect x="512" y="283" width="1" height="1" fill="#fff"/>
<rect x="512" y="287" width="1" height="1" fill="#fff"/>
<rect x="513" y="284" width="1" height="1" fill="#fff"/>
<rect x="513" y="286" width="1" height="1" fill="#fff"/>
<rect x="514" y="285" width="1" height="1" fill="#fff"/>
<rect x="353" y="287" width="1" height="2" fill="#ffff70"/>
<rect x="352" y="289" width="3" height="2" fill="#ffff70"/>
<text x="526.3" y="288" font-size="11" font-weight="normal" fill="#fff" textLength="98.0" lengthAdjust="spacingAndGlyphs" xml:space="preserve">UniRef100<tspan dy="-2">_</tspan><tspan dy="2">P00299</tspan></text>
<rect x="78" y="296" width="207" height="1" fill="#a420a4"/>
<rect x="78" y="295" width="17" height="3" fill="#a420a4"/>
<rect x="97" y="295" width="188" height="3" fill="#a420a4"/>
<rect x="77" y="292" width="1" height="9" fill="#fff"/>
<path d="M286 292L290 296.5L286 301Z" fill="#a420a4"/>
<rect x="285" y="291" width="1" height="11" fill="#fff"/>
<rect x="286" y="292" width="1" height="1" fill="#fff"/>
<rect x="286" y="300" width="1" height="1" fill="#fff"/>
<rect x="287" y="293" width="1" height="1" fill="#fff"/>
<rect x="287" y="299" width="1" height="1" fill="#fff"/>
<rect x="288" y="294" width="1" height="1" fill="#fff"/>
<rect x="288" y="298" width="1" height="1" fill="#fff"/>
<rect x="289" y="295" width="1" height="1" fill="#fff"/>
<rect x="289" y="297" width="1" height="1" fill="#fff"/>
<rect x="290" y="296" width="1" height="1" fill="#fff"/>
<rect x="317" y="296" width="192" height="1" fill="#00a400"/>
<rect x="317" y="295" width="4" height="3" fill="#00a400"/>
<rect x="323" y="295" width="5" height="3" fill="#00a400"/>
<rect x="331" y="295" width="178" height="3" fill="#00a400"/>
<rect x="316" y="292" width="1" height="9" fill="#fff"/>
<path d="M510 292L514 296.5L510 301Z" fill="#00a400"/>
<rect x="509" y="291" width="1" height="11" fill="#fff"/>
<rect x="510" y="292" width="1" height="1" fill="#fff"/>
<rect x="510" y="300" width="1" height="1" fill="#fff"/>
<rect x="511" y="293" width="1" height="1" fill="#fff"/>
<rect x="511" y="299" width="1" height="1" fill="#fff"/>
<rect x="512" y="294" width="1" height="1" fill="#fff"/>
<rect x="512" y="298" width="1" height="1" fill="#fff"/>
<rect x="513" y="295" width="1" height="1" fill="#fff"/>
<rect x="513" y="297" width="1" height="1" fill="#fff"/>
<rect x="514" y="296" width="1" height="1" fill="#fff"/>
<rect x="353" y="298" width="1" height="2" fill="#ffff70"/>
<rect x="352" y="300" width="3" height="2" fill="#ffff70"/>
<text x="526.3" y="299" font-size="11" font-weight="normal" fill="#fff" textLength="98.0" lengthAdjust="spacingAndGlyphs" xml:space="preserve">UniRef100<tspan dy="-2">_</tspan><tspan dy="2">A9PG34</tspan></text>
<rect x="10" y="306" width="517" height="3" fill="#000033"/>
<rect x="66" y="306" width="219" height="3" fill="#a420a4"/>
<rect x="65" y="303" width="1" height="9" fill="#fff"/>
<path d="M286 303L290 307.5L286 312Z" fill="#a420a4"/>
<rect x="285" y="302" width="1" height="11" fill="#fff"/>
<rect x="286" y="303" width="1" height="1" fill="#fff"/>
<rect x="286" y="311" width="1" height="1" fill="#fff"/>
<rect x="287" y="304" width="1" height="1" fill="#fff"/>
<rect x="287" y="310" width="1" height="1" fill="#fff"/>
<rect x="288" y="305" width="1" height="1" fill="#fff"/>
<rect x="288" y="309" width="1" height="1" fill="#fff"/>
<rect x="289" y="306" width="1" height="1" fill="#fff"/>
<rect x="289" y="308" width="1" height="1" fill="#fff"/>
<rect x="290" y="307" width="1" height="1" fill="#fff"/>
<rect x="305" y="306" width="204" height="3" fill="#000"/>
<rect x="305" y="307" width="204" height="1" fill="#a420a4"/>
<rect x="305" y="306" width="8" height="3" fill="#a420a4"/>
<rect x="315" y="306" width="6" height="3" fill="#a420a4"/>
<rect x="323" y="306" width="186" height="3" fill="#a420a4"/>
<rect x="304" y="303" width="1" height="9" fill="#fff"/>
<path d="M510 303L514 307.5L510 312Z" fill="#a420a4"/>
<rect x="509" y="302" width="1" height="11" fill="#fff"/>
<rect x="510" y="303" width="1" height="1" fill="#fff"/>
<rect x="510" y="311" width="1" height="1" fill="#fff"/>
<rect x="511" y="304" width="1" height="1" fill="#fff"/>
<rect x="511" y="310" width="1" height="1" fill="#fff"/>
<rect x="512" y="305" width="1" height="1" fill="#fff"/>
<rect x="512" y="309" width="1" height="1" fill="#fff"/>
<rect x="513" y="306" width="1" height="1" fill="#fff"/>
<rect x="513" y="308" width="1" height="1" fill="#fff"/>
<rect x="514" y="307" width="1" height="1" fill="#fff"/>
<text x="526.3" y="310" font-size="11" font-weight="normal" fill="#fff" textLength="98.0" lengthAdjust="spacingAndGlyphs" xml:space="preserve">UniRef100<tspan dy="-2">_</tspan><tspan dy="2">A9TKV7</tspan></text>
<rect x="66" y="317" width="219" height="3" fill="#a420a4"/>
<rect x="65" y="314" width="1" height="9" fill="#fff"/>
<path d="M286 314L290 318.5L286 323Z" fill="#a420a4"/>
<rect x="285" y="313" width="1" height="11" fill="#fff"/>
<rect x="286" y="314" width="1" height="1" fill="#fff"/>
<rect x="286" y="322" width="1" height="1" fill="#fff"/>
<rect x="287" y="315" width="1" height="1" fill="#fff"/>
<rect x="287" y="321" width="1" height="1" fill="#fff"/>
<rect x="288" y="316" width="1" height="1" fill="#fff"/>
<rect x="288" y="320" width="1" height="1" fill="#fff"/>
<rect x="289" y="317" width="1" height="1" fill="#fff"/>
<rect x="289" y="319" width="1" height="1" fill="#fff"/>
<rect x="290" y="318" width="1" height="1" fill="#fff"/>
<rect x="305" y="318" width="204" height="1" fill="#a420a4"/>
<rect x="305" y="317" width="8" height="3" fill="#a420a4"/>
<rect x="315" y="317" width="6" height="3" fill="#a420a4"/>
<rect x="323" y="317" width="186" height="3" fill="#a420a4"/>
<rect x="304" y="314" width="1" height="9" fill="#fff"/>
<path d="M510 314L514 318.5L510 323Z" fill="#a420a4"/>
<rect x="509" y="313" width="1" height="11" fill="#fff"/>
<rect x="510" y="314" width="1" height="1" fill="#fff"/>
<rect x="510" y="322" width="1" height="1" fill="#fff"/>
<rect x="511" y="315" width="1" height="1" fill="#fff"/>
<rect x="511" y="321" width="1" height="1" fill="#fff"/>
<rect x="512" y="316" width="1" height="1" fill="#fff"/>
<rect x="512" y="320" width="1" height="1" fill="#fff"/>
<rect x="513" y="317" width="1" height="1" fill="#fff"/>
<rect x="513" y="319" width="1" height="1" fill="#fff"/>
<rect x="514" y="318" width="1" height="1" fill="#fff"/>
<text x="526.3" y="321" font-size="11" font-weight="normal" fill="#fff" textLength="98.0" lengthAdjust="spacingAndGlyphs" xml:space="preserve">UniRef100<tspan dy="-2">_</tspan><tspan dy="2">Q9SXW9</tspan></text>
<rect x="10" y="328" width="517" height="3" fill="#000033"/>
<rect x="215" y="328" width="70" height="3" fill="#00a400"/>
<rect x="214" y="325" width="1" height="9" fill="#fff"/>
<path d="M286 325L290 329.5L286 334Z" fill="#00a400"/>
<rect x="285" y="324" width="1" height="11" fill="#fff"/>
<rect x="286" y="325" width="1" height="1" fill="#fff"/>
<rect x="286" y="333" width="1" height="1" fill="#fff"/>
<rect x="287" y="326" width="1" height="1" fill="#fff"/>
<rect x="287" y="332" width="1" height="1" fill="#fff"/>
<rect x="288" y="327" width="1" height="1" fill="#fff"/>
<rect x="288" y="331" width="1" height="1" fill="#fff"/>
<rect x="289" y="328" width="1" height="1" fill="#fff"/>
<rect x="289" y="330" width="1" height="1" fill="#fff"/>
<rect x="290" y="329" width="1" height="1" fill="#fff"/>
<rect x="313" y="328" width="192" height="3" fill="#000"/>
<rect x="313" y="329" width="192" height="1" fill="#00a400"/>
<rect x="313" y="328" width="4" height="3" fill="#00a400"/>
<rect x="320" y="328" width="5" height="3" fill="#00a400"/>
<rect x="328" y="328" width="177" height="3" fill="#00a400"/>
<rect x="312" y="325" width="1" height="9" fill="#fff"/>
<path d="M506 325L510 329.5L506 334Z" fill="#00a400"/>
<rect x="505" y="324" width="1" height="11" fill="#fff"/>
<rect x="506" y="325" width="1" height="1" fill="#fff"/>
<rect x="506" y="333" width="1" height="1" fill="#fff"/>
<rect x="507" y="326" width="1" height="1" fill="#fff"/>
<rect x="507" y="332" width="1" height="1" fill="#fff"/>
<rect x="508" y="327" width="1" height="1" fill="#fff"/>
<rect x="508" y="331" width="1" height="1" fill="#fff"/>
<rect x="509" y="328" width="1" height="1" fill="#fff"/>
<rect x="509" y="330" width="1" height="1" fill="#fff"/>
<rect x="510" y="329" width="1" height="1" fill="#fff"/>
<text x="526.3" y="332" font-size="11" font-weight="normal" fill="#fff" textLength="98.0" lengthAdjust="spacingAndGlyphs" xml:space="preserve">UniRef100<tspan dy="-2">_</tspan><tspan dy="2">P13133</tspan></text>
<rect x="305" y="340" width="204" height="1" fill="#00a400"/>
<rect x="305" y="339" width="8" height="3" fill="#00a400"/>
<rect x="315" y="339" width="6" height="3" fill="#00a400"/>
<rect x="323" y="339" width="186" height="3" fill="#00a400"/>
<rect x="304" y="336" width="1" height="9" fill="#fff"/>
<path d="M510 336L514 340.5L510 345Z" fill="#00a400"/>
<rect x="509" y="335" width="1" height="11" fill="#fff"/>
<rect x="510" y="336" width="1" height="1" fill="#fff"/>
<rect x="510" y="344" width="1" height="1" fill="#fff"/>
<rect x="511" y="337" width="1" height="1" fill="#fff"/>
<rect x="511" y="343" width="1" height="1" fill="#fff"/>
<rect x="512" y="338" width="1" height="1" fill="#fff"/>
<rect x="512" y="342" width="1" height="1" fill="#fff"/>
<rect x="513" y="339" width="1" height="1" fill="#fff"/>
<rect x="513" y="341" width="1" height="1" fill="#fff"/>
<rect x="514" y="340" width="1" height="1" fill="#fff"/>
<text x="526.3" y="343" font-size="11" font-weight="normal" fill="#fff" textLength="98.0" lengthAdjust="spacingAndGlyphs" xml:space="preserve">UniRef100<tspan dy="-2">_</tspan><tspan dy="2">C0PAK8</tspan></text>
<rect x="10" y="350" width="517" height="3" fill="#000033"/>
<rect x="305" y="350" width="204" height="3" fill="#000"/>
<rect x="305" y="351" width="204" height="1" fill="#00a400"/>
<rect x="305" y="350" width="8" height="3" fill="#00a400"/>
<rect x="315" y="350" width="6" height="3" fill="#00a400"/>
<rect x="323" y="350" width="186" height="3" fill="#00a400"/>
<rect x="304" y="347" width="1" height="9" fill="#fff"/>
<path d="M510 347L514 351.5L510 356Z" fill="#00a400"/>
<rect x="509" y="346" width="1" height="11" fill="#fff"/>
<rect x="510" y="347" width="1" height="1" fill="#fff"/>
<rect x="510" y="355" width="1" height="1" fill="#fff"/>
<rect x="511" y="348" width="1" height="1" fill="#fff"/>
<rect x="511" y="354" width="1" height="1" fill="#fff"/>
<rect x="512" y="349" width="1" height="1" fill="#fff"/>
<rect x="512" y="353" width="1" height="1" fill="#fff"/>
<rect x="513" y="350" width="1" height="1" fill="#fff"/>
<rect x="513" y="352" width="1" height="1" fill="#fff"/>
<rect x="514" y="351" width="1" height="1" fill="#fff"/>
<text x="526.3" y="354" font-size="11" font-weight="normal" fill="#fff" textLength="98.0" lengthAdjust="spacingAndGlyphs" xml:space="preserve">UniRef100<tspan dy="-2">_</tspan><tspan dy="2">B4FCL1</tspan></text>
<rect x="78" y="362" width="207" height="1" fill="#a420a4"/>
<rect x="78" y="361" width="17" height="3" fill="#a420a4"/>
<rect x="97" y="361" width="188" height="3" fill="#a420a4"/>
<rect x="77" y="358" width="1" height="9" fill="#fff"/>
<path d="M286 358L290 362.5L286 367Z" fill="#a420a4"/>
<rect x="285" y="357" width="1" height="11" fill="#fff"/>
<rect x="286" y="358" width="1" height="1" fill="#fff"/>
<rect x="286" y="366" width="1" height="1" fill="#fff"/>
<rect x="287" y="359" width="1" height="1" fill="#fff"/>
<rect x="287" y="365" width="1" height="1" fill="#fff"/>
<rect x="288" y="360" width="1" height="1" fill="#fff"/>
<rect x="288" y="364" width="1" height="1" fill="#fff"/>
<rect x="289" y="361" width="1" height="1" fill="#fff"/>
<rect x="289" y="363" width="1" height="1" fill="#fff"/>
<rect x="290" y="362" width="1" height="1" fill="#fff"/>
<rect x="317" y="362" width="192" height="1" fill="#00a400"/>
<rect x="317" y="361" width="4" height="3" fill="#00a400"/>
<rect x="323" y="361" width="5" height="3" fill="#00a400"/>
<rect x="331" y="361" width="178" height="3" fill="#00a400"/>
<rect x="316" y="358" width="1" height="9" fill="#fff"/>
<path d="M510 358L514 362.5L510 367Z" fill="#00a400"/>
<rect x="509" y="357" width="1" height="11" fill="#fff"/>
<rect x="510" y="358" width="1" height="1" fill="#fff"/>
<rect x="510" y="366" width="1" height="1" fill="#fff"/>
<rect x="511" y="359" width="1" height="1" fill="#fff"/>
<rect x="511" y="365" width="1" height="1" fill="#fff"/>
<rect x="512" y="360" width="1" height="1" fill="#fff"/>
<rect x="512" y="364" width="1" height="1" fill="#fff"/>
<rect x="513" y="361" width="1" height="1" fill="#fff"/>
<rect x="513" y="363" width="1" height="1" fill="#fff"/>
<rect x="514" y="362" width="1" height="1" fill="#fff"/>
<rect x="353" y="364" width="1" height="2" fill="#ffff70"/>
<rect x="352" y="366" width="3" height="2" fill="#ffff70"/>
<text x="526.3" y="365" font-size="11" font-weight="normal" fill="#fff" textLength="98.0" lengthAdjust="spacingAndGlyphs" xml:space="preserve">UniRef100<tspan dy="-2">_</tspan><tspan dy="2">A9PJU8</tspan></text>
<rect x="10" y="372" width="517" height="3" fill="#000033"/>
<rect x="305" y="372" width="204" height="3" fill="#000"/>
<rect x="305" y="373" width="204" height="1" fill="#00a400"/>
<rect x="305" y="372" width="8" height="3" fill="#00a400"/>
<rect x="315" y="372" width="6" height="3" fill="#00a400"/>
<rect x="323" y="372" width="186" height="3" fill="#00a400"/>
<rect x="304" y="369" width="1" height="9" fill="#fff"/>
<path d="M510 369L514 373.5L510 378Z" fill="#00a400"/>
<rect x="509" y="368" width="1" height="11" fill="#fff"/>
<rect x="510" y="369" width="1" height="1" fill="#fff"/>
<rect x="510" y="377" width="1" height="1" fill="#fff"/>
<rect x="511" y="370" width="1" height="1" fill="#fff"/>
<rect x="511" y="376" width="1" height="1" fill="#fff"/>
<rect x="512" y="371" width="1" height="1" fill="#fff"/>
<rect x="512" y="375" width="1" height="1" fill="#fff"/>
<rect x="513" y="372" width="1" height="1" fill="#fff"/>
<rect x="513" y="374" width="1" height="1" fill="#fff"/>
<rect x="514" y="373" width="1" height="1" fill="#fff"/>
<text x="526.3" y="376" font-size="11" font-weight="normal" fill="#fff" textLength="98.0" lengthAdjust="spacingAndGlyphs" xml:space="preserve">UniRef100<tspan dy="-2">_</tspan><tspan dy="2">C5Z216</tspan></text>
<rect x="305" y="384" width="204" height="1" fill="#00a400"/>
<rect x="305" y="383" width="8" height="3" fill="#00a400"/>
<rect x="315" y="383" width="6" height="3" fill="#00a400"/>
<rect x="323" y="383" width="186" height="3" fill="#00a400"/>
<rect x="304" y="380" width="1" height="9" fill="#fff"/>
<path d="M510 380L514 384.5L510 389Z" fill="#00a400"/>
<rect x="509" y="379" width="1" height="11" fill="#fff"/>
<rect x="510" y="380" width="1" height="1" fill="#fff"/>
<rect x="510" y="388" width="1" height="1" fill="#fff"/>
<rect x="511" y="381" width="1" height="1" fill="#fff"/>
<rect x="511" y="387" width="1" height="1" fill="#fff"/>
<rect x="512" y="382" width="1" height="1" fill="#fff"/>
<rect x="512" y="386" width="1" height="1" fill="#fff"/>
<rect x="513" y="383" width="1" height="1" fill="#fff"/>
<rect x="513" y="385" width="1" height="1" fill="#fff"/>
<rect x="514" y="384" width="1" height="1" fill="#fff"/>
<text x="526.3" y="387" font-size="11" font-weight="normal" fill="#fff" textLength="98.0" lengthAdjust="spacingAndGlyphs" xml:space="preserve">UniRef100<tspan dy="-2">_</tspan><tspan dy="2">B6SSB9</tspan></text>
<rect x="10" y="394" width="517" height="3" fill="#000033"/>
<rect x="305" y="394" width="204" height="3" fill="#000"/>
<rect x="305" y="395" width="204" height="1" fill="#00a400"/>
<rect x="305" y="394" width="8" height="3" fill="#00a400"/>
<rect x="315" y="394" width="6" height="3" fill="#00a400"/>
<rect x="323" y="394" width="186" height="3" fill="#00a400"/>
<rect x="304" y="391" width="1" height="9" fill="#fff"/>
<path d="M510 391L514 395.5L510 400Z" fill="#00a400"/>
<rect x="509" y="390" width="1" height="11" fill="#fff"/>
<rect x="510" y="391" width="1" height="1" fill="#fff"/>
<rect x="510" y="399" width="1" height="1" fill="#fff"/>
<rect x="511" y="392" width="1" height="1" fill="#fff"/>
<rect x="511" y="398" width="1" height="1" fill="#fff"/>
<rect x="512" y="393" width="1" height="1" fill="#fff"/>
<rect x="512" y="397" width="1" height="1" fill="#fff"/>
<rect x="513" y="394" width="1" height="1" fill="#fff"/>
<rect x="513" y="396" width="1" height="1" fill="#fff"/>
<rect x="514" y="395" width="1" height="1" fill="#fff"/>
<text x="526.3" y="398" font-size="11" font-weight="normal" fill="#fff" textLength="98.0" lengthAdjust="spacingAndGlyphs" xml:space="preserve">UniRef100<tspan dy="-2">_</tspan><tspan dy="2">B4G095</tspan></text>
<rect x="78" y="406" width="207" height="1" fill="#a420a4"/>
<rect x="78" y="405" width="17" height="3" fill="#a420a4"/>
<rect x="97" y="405" width="188" height="3" fill="#a420a4"/>
<rect x="77" y="402" width="1" height="9" fill="#fff"/>
<path d="M286 402L290 406.5L286 411Z" fill="#a420a4"/>
<rect x="285" y="401" width="1" height="11" fill="#fff"/>
<rect x="286" y="402" width="1" height="1" fill="#fff"/>
<rect x="286" y="410" width="1" height="1" fill="#fff"/>
<rect x="287" y="403" width="1" height="1" fill="#fff"/>
<rect x="287" y="409" width="1" height="1" fill="#fff"/>
<rect x="288" y="404" width="1" height="1" fill="#fff"/>
<rect x="288" y="408" width="1" height="1" fill="#fff"/>
<rect x="289" y="405" width="1" height="1" fill="#fff"/>
<rect x="289" y="407" width="1" height="1" fill="#fff"/>
<rect x="290" y="406" width="1" height="1" fill="#fff"/>
<rect x="317" y="406" width="184" height="1" fill="#00a400"/>
<rect x="317" y="405" width="4" height="3" fill="#00a400"/>
<rect x="323" y="405" width="5" height="3" fill="#00a400"/>
<rect x="331" y="405" width="170" height="3" fill="#00a400"/>
<rect x="316" y="402" width="1" height="9" fill="#fff"/>
<path d="M502 402L506 406.5L502 411Z" fill="#00a400"/>
<rect x="501" y="401" width="1" height="11" fill="#fff"/>
<rect x="502" y="402" width="1" height="1" fill="#fff"/>
<rect x="502" y="410" width="1" height="1" fill="#fff"/>
<rect x="503" y="403" width="1" height="1" fill="#fff"/>
<rect x="503" y="409" width="1" height="1" fill="#fff"/>
<rect x="504" y="404" width="1" height="1" fill="#fff"/>
<rect x="504" y="408" width="1" height="1" fill="#fff"/>
<rect x="505" y="405" width="1" height="1" fill="#fff"/>
<rect x="505" y="407" width="1" height="1" fill="#fff"/>
<rect x="506" y="406" width="1" height="1" fill="#fff"/>
<rect x="353" y="408" width="1" height="2" fill="#ffff70"/>
<rect x="352" y="410" width="3" height="2" fill="#ffff70"/>
<text x="526.3" y="409" font-size="11" font-weight="normal" fill="#fff" textLength="98.0" lengthAdjust="spacingAndGlyphs" xml:space="preserve">UniRef100<tspan dy="-2">_</tspan><tspan dy="2">A9PK67</tspan></text>
<rect x="10" y="416" width="517" height="3" fill="#000033"/>
<rect x="55" y="416" width="230" height="3" fill="#000"/>
<rect x="55" y="417" width="230" height="1" fill="#a420a4"/>
<rect x="55" y="416" width="4" height="3" fill="#a420a4"/>
<rect x="66" y="416" width="219" height="3" fill="#a420a4"/>
<rect x="54" y="413" width="1" height="9" fill="#fff"/>
<path d="M286 413L290 417.5L286 422Z" fill="#a420a4"/>
<rect x="285" y="412" width="1" height="11" fill="#fff"/>
<rect x="286" y="413" width="1" height="1" fill="#fff"/>
<rect x="286" y="421" width="1" height="1" fill="#fff"/>
<rect x="287" y="414" width="1" height="1" fill="#fff"/>
<rect x="287" y="420" width="1" height="1" fill="#fff"/>
<rect x="288" y="415" width="1" height="1" fill="#fff"/>
<rect x="288" y="419" width="1" height="1" fill="#fff"/>
<rect x="289" y="416" width="1" height="1" fill="#fff"/>
<rect x="289" y="418" width="1" height="1" fill="#fff"/>
<rect x="290" y="417" width="1" height="1" fill="#fff"/>
<rect x="305" y="416" width="204" height="3" fill="#000"/>
<rect x="305" y="417" width="204" height="1" fill="#a420a4"/>
<rect x="305" y="416" width="6" height="3" fill="#a420a4"/>
<rect x="314" y="416" width="195" height="3" fill="#a420a4"/>
<rect x="304" y="413" width="1" height="9" fill="#fff"/>
<path d="M510 413L514 417.5L510 422Z" fill="#a420a4"/>
<rect x="509" y="412" width="1" height="11" fill="#fff"/>
<rect x="510" y="413" width="1" height="1" fill="#fff"/>
<rect x="510" y="421" width="1" height="1" fill="#fff"/>
<rect x="511" y="414" width="1" height="1" fill="#fff"/>
<rect x="511" y="420" width="1" height="1" fill="#fff"/>
<rect x="512" y="415" width="1" height="1" fill="#fff"/>
<rect x="512" y="419" width="1" height="1" fill="#fff"/>
<rect x="513" y="416" width="1" height="1" fill="#fff"/>
<rect x="513" y="418" width="1" height="1" fill="#fff"/>
<rect x="514" y="417" width="1" height="1" fill="#fff"/>
<text x="526.3" y="420" font-size="11" font-weight="normal" fill="#fff" textLength="98.0" lengthAdjust="spacingAndGlyphs" xml:space="preserve">UniRef100<tspan dy="-2">_</tspan><tspan dy="2">A9RDX6</tspan></text>
<text x="8.8" y="439" font-size="11" font-weight="normal" fill="#fff" textLength="68" lengthAdjust="spacingAndGlyphs" xml:space="preserve">Large gaps:</text>
<text x="87.3" y="439" font-size="11" font-weight="normal" fill="#fff" textLength="68" lengthAdjust="spacingAndGlyphs" xml:space="preserve">(in Query)/</text>
<text x="165.3" y="439" font-size="11" font-weight="normal" fill="#fff" textLength="74" lengthAdjust="spacingAndGlyphs" xml:space="preserve">(in Subject)</text>
<rect x="82" y="432" width="1" height="2" fill="#ffff70"/>
<rect x="81" y="434" width="3" height="3" fill="#ffff70"/>
<rect x="80" y="437" width="5" height="2" fill="#ffff70"/>
<rect x="155" y="435" width="6" height="1" fill="#00c4c8"/>
<rect x="438" y="431" width="1" height="9" fill="#383200"/>
<rect x="456" y="431" width="1" height="9" fill="#383200"/>
<rect x="439" y="434" width="17" height="3" fill="#00c4c8"/>
<text x="459.7" y="439" font-size="11" font-weight="normal" fill="#fff" textLength="55" lengthAdjust="spacingAndGlyphs" xml:space="preserve">=100char.</text>
</svg>
</body></html>
